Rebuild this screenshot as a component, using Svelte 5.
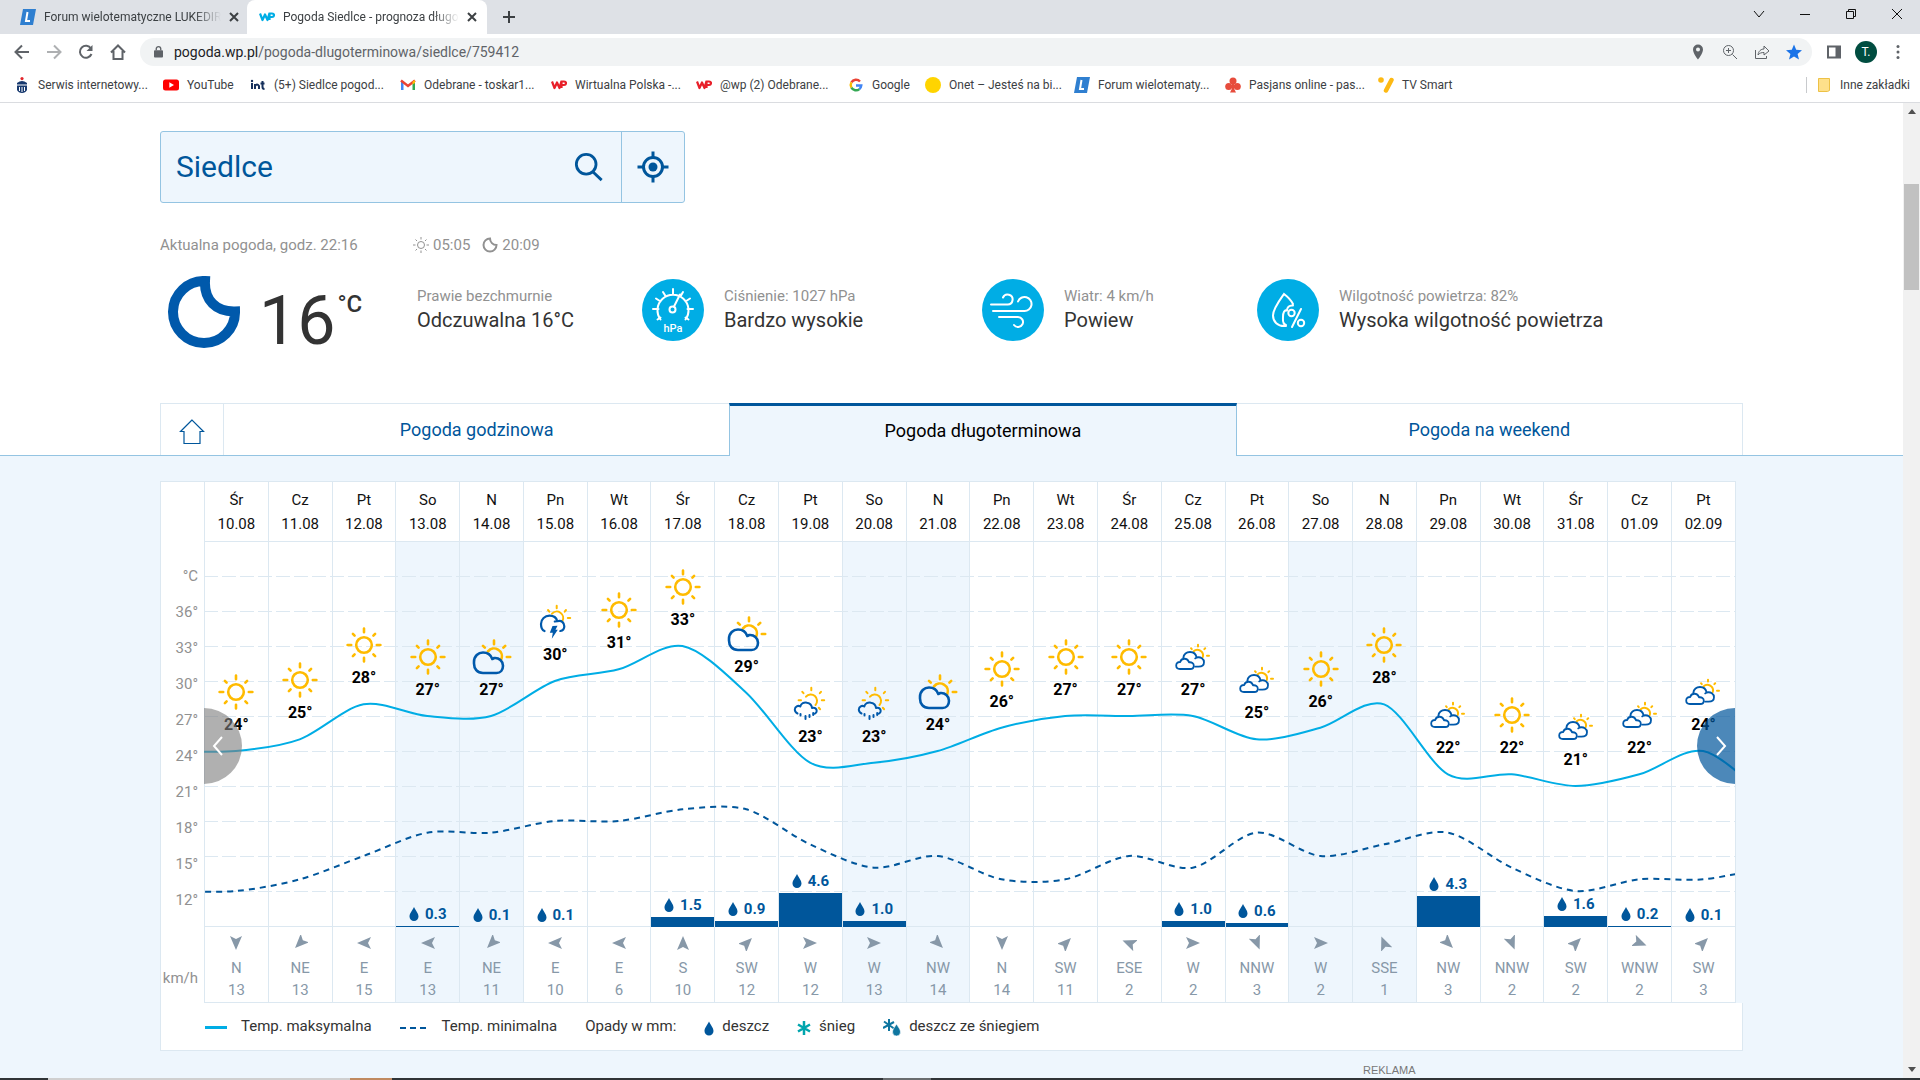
<script>
  // Geometry of the plot area
  const COL = 64;
  const PLOT_HEIGHT = 385;
  const ZERO_LEVEL = 12; // temperature drawn on the lowest grid line
  const STEP = 35; // height of three degrees

  const bookmarks = [
    { icon: 'bank', label: 'Serwis internetowy...', width: 149 },
    { icon: 'youtube', label: 'YouTube', width: 87 },
    { icon: 'int', label: '(5+) Siedlce pogod...', width: 150 },
    { icon: 'gmail', label: 'Odebrane - toskar1...', width: 151 },
    { icon: 'wp', label: 'Wirtualna Polska -...', width: 145 },
    { icon: 'wp', label: '@wp (2) Odebrane...', width: 152 },
    { icon: 'google', label: 'Google', width: 77 },
    { icon: 'onet', label: 'Onet – Jesteś na bi...', width: 149 },
    { icon: 'forum', label: 'Forum wielotematy...', width: 151 },
    { icon: 'club', label: 'Pasjans online - pas...', width: 153 },
    { icon: 'tv', label: 'TV Smart', width: 90 }
  ];

  // day, date, icon, max, min, rain in mm, rain bar height, wind direction, wind speed
  const days = [
    ['Śr', '10.08', 'sun', 24, 12, null, 0, 'N', 13],
    ['Cz', '11.08', 'sun', 25, 13, null, 0, 'NE', 13],
    ['Pt', '12.08', 'sun', 28, 15, null, 0, 'E', 15],
    ['So', '13.08', 'sun', 27, 17, '0.3', 1, 'E', 13],
    ['N', '14.08', 'partly', 27, 17, '0.1', 0, 'NE', 11],
    ['Pn', '15.08', 'storm', 30, 18, '0.1', 0, 'E', 10],
    ['Wt', '16.08', 'sun', 31, 18, null, 0, 'E', 6],
    ['Śr', '17.08', 'sun', 33, 19, '1.5', 10, 'S', 10],
    ['Cz', '18.08', 'partly', 29, 19, '0.9', 6, 'SW', 12],
    ['Pt', '19.08', 'showers', 23, 16, '4.6', 34, 'W', 12],
    ['So', '20.08', 'showers', 23, 14, '1.0', 6, 'W', 13],
    ['N', '21.08', 'partly', 24, 15, null, 0, 'NW', 14],
    ['Pn', '22.08', 'sun', 26, 13, null, 0, 'N', 14],
    ['Wt', '23.08', 'sun', 27, 13, null, 0, 'SW', 11],
    ['Śr', '24.08', 'sun', 27, 15, null, 0, 'ESE', 2],
    ['Cz', '25.08', 'clouds', 27, 14, '1.0', 6, 'W', 2],
    ['Pt', '26.08', 'clouds', 25, 17, '0.6', 4, 'NNW', 3],
    ['So', '27.08', 'sun', 26, 15, null, 0, 'W', 2],
    ['N', '28.08', 'sun', 28, 16, null, 0, 'SSE', 1],
    ['Pn', '29.08', 'clouds', 22, 17, '4.3', 31, 'NW', 3],
    ['Wt', '30.08', 'sun', 22, 14, null, 0, 'NNW', 2],
    ['Śr', '31.08', 'clouds', 21, 12, '1.6', 11, 'SW', 2],
    ['Cz', '01.09', 'clouds', 22, 13, '0.2', 1, 'WNW', 2],
    ['Pt', '02.09', 'clouds', 24, 13, '0.1', 0, 'SW', 3]
  ].map(([day, date, icon, max, min, rain, bar, wind, speed]) => ({
    day, date, icon, max, min, rain, bar, wind, speed,
    weekend: day === 'So' || day === 'N'
  }));

  const axis = ['°C', '36°', '33°', '30°', '27°', '24°', '21°', '18°', '15°', '12°'];

  // Wind comes from the named direction, the arrow shows where it blows
  const arrowAngle = {
    N: 180, NE: 225, E: 270, SSE: 338, ESE: 292, S: 0, SW: 45, W: 90, WNW: 112, NW: 135, NNW: 158
  };

  const fromBottom = (temp) => STEP + ((temp - ZERO_LEVEL) * STEP) / 3;

  // Smooth curve through all points
  function curve(values) {
    const p = values.map((v, i) => [(i - 0.5) * COL, PLOT_HEIGHT - fromBottom(v)]);
    const tangent = (i) => {
      const a = p[Math.max(i - 1, 0)];
      const b = p[Math.min(i + 1, p.length - 1)];
      return [(b[0] - a[0]) * 0.15, (b[1] - a[1]) * 0.15];
    };
    let d = `M${p[0]}`;
    for (let i = 1; i < p.length; i++) {
      const s = tangent(i - 1);
      const e = tangent(i);
      d += `C${p[i - 1][0] + s[0]},${p[i - 1][1] + s[1]} ${p[i][0] - e[0]},${p[i][1] - e[1]} ${p[i]}`;
    }
    return d;
  }

  const maxLine = curve([24, ...days.map((d) => d.max), 20]);
  const minLine = curve([12, ...days.map((d) => d.min), 14]);
  const gridLines = Array.from({ length: 10 }, (_, i) => (i + 1) * STEP);

  let city = $state('Siedlce');
</script>

{#snippet favicon(name)}
  <svg class="favicon" viewBox="0 0 16 16" aria-hidden="true">
    {#if name === 'forum'}
      <path d="M3 0h13l-3 16H0z" fill="#2f7fd0" />
      <path d="M7.5 3 6 12h4" fill="none" stroke="#fff" stroke-width="2" />
    {:else if name === 'bank'}
      <circle cx="8" cy="1.6" r="1.6" fill="#e3262c" />
      <path d="M3 6q5-4 10 0v7q-1.500 3-5 3t-5-3z" fill="#17396f" />
      <path d="M3 8h10M5.500 10v4M8 10v5M10.500 10v4" stroke="#fff" />
    {:else if name === 'youtube'}
      <rect y="2.500" width="16" height="11" rx="2.500" fill="#f00" />
      <path d="M6.300 5.300v5.400L11 8z" fill="#fff" />
    {:else if name === 'int'}
      <path d="M2 6v6M5 12V7m0 2q2-3 4 0v3M12.500 4v6q0 2 2 2M10.500 6.500h4" fill="none" stroke="#16305c" stroke-width="2" />
      <circle cx="2" cy="4" r="1.200" fill="#16305c" />
    {:else if name === 'gmail'}
      <path d="M1 3v10h2.500V6z" fill="#4285f4" />
      <path d="M15 3v10h-2.500V6z" fill="#34a853" />
      <path d="M1 3.500 8 9l7-5.500" fill="none" stroke="#ea4335" stroke-width="2.500" />
      <path d="M12.500 4.500 15 3v3l-2.500 1.500z" fill="#fbbc04" />
    {:else if name === 'wp' || name === 'wpblue'}
      <path d="M1 4.500 3.500 11 6 5.500 8.500 11l2-7M10.500 11V4.500h2.500q2 0 2 1.700T13 8h-2" fill="none" stroke={name === 'wp' ? '#e8202a' : '#00ade5'} stroke-width="2.200" stroke-linejoin="round" />
    {:else if name === 'google'}
      <g fill="none" stroke-width="2.400">
        <path d="M12 4.500A5.300 5.300 0 0 0 3.400 5.400" stroke="#ea4335" />
        <path d="M3.400 5.400a5.300 5.300 0 0 0 0 5.200" stroke="#fbbc05" />
        <path d="M3.400 10.600a5.300 5.300 0 0 0 8 1.500" stroke="#34a853" />
        <path d="M11.400 12.100A5.300 5.300 0 0 0 13.300 8.500H8" stroke="#4285f4" />
      </g>
    {:else if name === 'onet'}
      <circle cx="8" cy="8" r="8" fill="#ffd400" />
    {:else if name === 'club'}
      <g fill="#e74c3c">
        <circle cx="8" cy="4" r="3.500" />
        <circle cx="3.700" cy="9.500" r="3.500" />
        <circle cx="12.300" cy="9.500" r="3.500" />
        <path d="M7 6h2v5.500l2 4H5l2-4z" />
      </g>
    {:else if name === 'tv'}
      <circle cx="3" cy="3" r="2.800" fill="#fdb913" />
      <path d="M13.500 3 8 13.500" stroke="#fdb913" stroke-width="4.500" stroke-linecap="round" />
    {/if}
  </svg>
{/snippet}

{#snippet weather(name)}
  <svg class="weather" viewBox="0 0 40 40" fill="none" stroke-linecap="round" stroke-linejoin="round" aria-hidden="true">
    {#if name === 'sun'}
      <g stroke="#fb0" stroke-width="2.600">
        <circle cx="20" cy="20" r="7.800" />
        <path d="M20 3.600v3.600M20 32.800v3.600M3.600 20h3.600M32.800 20h3.600M8.900 8.900l1.700 1.700M29.400 29.400l1.700 1.700M31.100 8.900l-1.700 1.700M8.900 31.100l1.700-1.700" />
      </g>
    {:else if name === 'partly'}
      <g stroke="#fb0" stroke-width="2.600">
        <path d="M16 14.400a7.800 7.800 0 0 1 13.300 7.800M22 3.600v3.600M11 8.900l1.800 1.800M33.200 8.900l-1.800 1.800M34.800 20h3.400" />
      </g>
      <path d="M11 36C5 36 2 31.500 2 26.500v-1.500C2 19 6.300 15.500 11 15.500c4.500 0 8 2.700 9.300 6.500l2-1C27 20.500 31 24 31 28.700 31 33 28.500 36 24.500 36z" stroke="#0059ab" stroke-width="2.600" />
    {:else if name === 'storm'}
      <path d="M17 11.700a6.400 6.400 0 0 1 10.400 7.300M21.700 3.800v2.400M13 8l1.300 1.600M31 8l-1.300 1.600M32.800 16h2.400" stroke="#fb0" stroke-width="2" />
      <path d="M9.500 29C7 28 6 25.500 6 22c0-5 4-8.300 8.500-8.300 4.200 0 7 2.300 7.800 5.500C27 18 29.300 21 29.300 24.300c0 2.700-1.500 4.300-4 4.700M19.800 19.500l2.500-.3" stroke="#0059ab" stroke-width="2.200" />
      <path d="m17.500 24 5-.3-2 4h2.300l-6 9 1-6h-3z" fill="#0059ab" />
    {:else if name === 'showers'}
      <path d="M16 12.700a6.300 6.300 0 1 1 9.500 8.300M21.300 3.800v2.400M8.600 16.300H11M31.800 16.300h2.400M12.300 7.800l1.200 1.400M31 7.800l-1.200 1.400M28.800 23.800l1.300 1.400" stroke="#fb0" stroke-width="2" />
      <path d="M7.500 29.500C5.500 28.500 4.800 27 4.800 25.500 5 22.500 8 21 10.300 22.500 11 19.500 14 18 17 18.700c3 .6 4.800 2.800 5 5.300 3-1 4.700 1 4.700 3 0 1.300-.7 2.300-2 2.700" stroke="#0059ab" stroke-width="2" />
      <path d="M10.500 30v1.500M15.500 32v3M19.500 31v2M23.200 29v2" stroke="#0059ab" stroke-width="2" />
    {:else}
      <path d="M20.500 14.500a5.600 5.600 0 0 1 9.300 5.500M25 7.800v1.600M18 11.200l.8.900M32.200 11.200l-.9.900M34 18.700h2" stroke="#fb0" stroke-width="2" />
      <path d="M10.300 20.800C11 17 14 15 17 15c3.500 0 6 2.200 6.600 5.500 4.200-1 7.400 1.400 7.400 4.700 0 3-2.300 4.500-5.500 4.500h-3M23.600 20.500l-1.400.9M7 32c-2.600 0-3.800-1.500-3.800-3.500C3.200 26 5 24.800 7.200 25c1-4 7-4.800 8.800.3 2.800-.4 4.800 1 4.800 3.400 0 2-1.500 3.300-3.600 3.300z" stroke="#0059ab" stroke-width="1.800" />
    {/if}
  </svg>
{/snippet}

{#snippet drop()}
  <svg class="drop" viewBox="0 0 10 14" aria-hidden="true">
    <path d="M5 0C7 4 9.500 6.500 9.500 9.500a4.500 4.500 0 0 1-9 0C.5 6.500 3 4 5 0z" fill="currentColor" />
  </svg>
{/snippet}

<div class="window">
  <!-- Browser tabs -->
  <header class="tabstrip">
    <div class="tab">
      {@render favicon('forum')}
      <span class="tab-title">Forum wielotematyczne LUKEDIR</span>
      <button class="close" aria-label="Zamknij kartę">
        <svg viewBox="0 0 10 10"><path d="m1 1 8 8m0-8-8 8" /></svg>
      </button>
    </div>
    <div class="tab active">
      {@render favicon('wpblue')}
      <span class="tab-title">Pogoda Siedlce - prognoza długo</span>
      <button class="close" aria-label="Zamknij kartę">
        <svg viewBox="0 0 10 10"><path d="m1 1 8 8m0-8-8 8" /></svg>
      </button>
    </div>
    <button class="new-tab" aria-label="Nowa karta">
      <svg viewBox="0 0 14 14"><path d="M7 1v12M1 7h12" /></svg>
    </button>
    <div class="controls">
      <button aria-label="Szukaj kart"><svg viewBox="0 0 12 12"><path d="m1 3 5 6 5-6" /></svg></button>
      <button aria-label="Minimalizuj"><svg viewBox="0 0 12 12"><path d="M1 6.500h10" /></svg></button>
      <button aria-label="Przywróć"><svg viewBox="0 0 12 12"><path d="M1.500 3.500h7v7h-7zM3.500 3V1.500h7v7H9" /></svg></button>
      <button aria-label="Zamknij"><svg viewBox="0 0 12 12"><path d="m1 1 10 10m0-10L1 11" /></svg></button>
    </div>
  </header>

  <!-- Address bar -->
  <div class="toolbar">
    <button aria-label="Wstecz"><svg viewBox="0 0 16 16"><path d="M15 8H2m6-6.500L1.500 8 8 14.500" /></svg></button>
    <button class="disabled" aria-label="Dalej"><svg viewBox="0 0 16 16"><path d="M1 8h13M8 1.500 14.500 8 8 14.500" /></svg></button>
    <button aria-label="Odśwież"><svg viewBox="0 0 16 16"><path d="M13.500 10A6 6 0 1 1 13 4.500" /><path d="M14.500 1v6h-6z" fill="#5f6368" stroke="none" /></svg></button>
    <button aria-label="Strona główna"><svg viewBox="0 0 16 16"><path d="M1 8.500 8 1.500l7 7M3.500 7v8h9V7" /></svg></button>
    <div class="address">
      <svg class="lock" viewBox="0 0 10 14"><rect y="5" width="10" height="8" rx="1" fill="#5f6368" /><path d="M2.500 5V3.500a2.500 2.500 0 0 1 5 0V5" fill="none" stroke="#5f6368" stroke-width="1.500" /></svg>
      <span class="url"><b>pogoda.wp.pl</b>/pogoda-dlugoterminowa/siedlce/759412</span>
      <button aria-label="Lokalizacja"><svg viewBox="0 0 16 16"><path d="M8 .5a5 5 0 0 0-5 5c0 4 5 10 5 10s5-6 5-10a5 5 0 0 0-5-5zm0 3a2 2 0 1 1 0 4 2 2 0 0 1 0-4z" fill="#5f6368" stroke="none" /></svg></button>
      <button aria-label="Powiększenie"><svg class="thin" viewBox="0 0 16 16"><circle cx="6.500" cy="6.500" r="5" /><path d="m10.500 10.500 4.500 4.500M4 6.500h5M6.500 4v5" /></svg></button>
      <button aria-label="Udostępnij"><svg class="thin" viewBox="0 0 16 16"><path d="M1.500 6v8.500h11V12M4 11c.5-4 3-6 6-6V2l5 5-5 4V8.500C7.500 8.500 5.500 9 4 11z" /></svg></button>
      <button aria-label="Zakładka"><svg viewBox="0 0 16 16"><path d="m8 .5 2.200 5.300 5.800.4-4.400 3.700 1.400 5.600L8 12.400l-5 3.100 1.400-5.600L0 6.200l5.800-.4z" fill="#1a73e8" stroke="none" /></svg></button>
    </div>
    <button aria-label="Panel boczny"><svg viewBox="0 0 16 16"><path d="M2 2.500h12v11H2z" /><path d="M9.500 2h5v12h-5z" fill="#5f6368" stroke="none" /></svg></button>
    <button class="avatar" aria-label="Profil">T.</button>
    <button aria-label="Menu"><svg viewBox="0 0 16 16"><g fill="#5f6368" stroke="none"><circle cx="8" cy="2.500" r="1.500" /><circle cx="8" cy="8" r="1.500" /><circle cx="8" cy="13.500" r="1.500" /></g></svg></button>
  </div>

  <nav class="bookmarks">
    {#each bookmarks as b}
      <a href="#{b.icon}" style:width="{b.width}px">{@render favicon(b.icon)}<span>{b.label}</span></a>
    {/each}
    <a class="other" href="#inne">
      <svg class="favicon" viewBox="0 0 16 16"><path d="M2.500 1.500h11v12l-2 1h-9z" fill="#fee08b" stroke="#edc145" /></svg>
      <span>Inne zakładki</span>
    </a>
  </nav>

  <div class="viewport">
    <main>
      <section class="container current">
        <form class="search" onsubmit={(e) => e.preventDefault()}>
          <input aria-label="Miejscowość" bind:value={city} />
          <button class="find" aria-label="Szukaj">
            <svg viewBox="0 0 32 32"><circle cx="13" cy="13" r="10.500" /><path d="m19.500 20.500 10 9.500" /></svg>
          </button>
          <button class="locate" type="button" aria-label="Zlokalizuj mnie">
            <svg viewBox="0 0 32 32"><circle cx="16" cy="16" r="9.500" /><circle cx="16" cy="16" r="4.500" fill="#00569b" stroke="none" /><path d="M16 .5v6M16 25.500v6M.5 16h6M25.500 16h6" /></svg>
          </button>
        </form>

        <div class="meta">
          <span>Aktualna pogoda, godz. 22:16</span>
          <span class="times">
            <svg viewBox="0 0 16 16"><circle cx="8" cy="8" r="3.500" /><path d="M8 0v2.500M8 13.500V16M0 8h2.500M13.500 8H16M2.500 2.500l1.500 1.500M12 12l1.500 1.500M13.500 2.500 12 4M4 12l-1.500 1.500" /></svg>
            05:05
            <svg class="moon-small" viewBox="0 0 16 16"><path d="M8 1.500A6.500 6.500 0 1 0 14.500 8 6.500 6.500 0 0 1 8 1.500z" stroke-width="2" /></svg>
            20:09
          </span>
        </div>

        <div class="now">
          <div class="temp">
            <svg class="moon" viewBox="0 0 72 72"><path d="M37 5A31 31 0 1 0 67 35.500C48 36 36 24 37 5z" /></svg>
            <span class="degrees">16</span><sup>°C</sup>
          </div>
          <div class="fact">
            <p><small>Prawie bezchmurnie</small>Odczuwalna 16°C</p>
          </div>
          <div class="fact">
            <svg class="badge" viewBox="0 0 62 62">
              <circle cx="31" cy="31" r="31" fill="#00ade5" stroke="none" />
              <path d="M18.500 40.500a15.500 15.500 0 1 1 25 0M31 10v5.500M11 30h5.500M45.500 30H51M14 19.500l4.500 3M48 19.500l-4.500 3M21 13l2.500 4M41 13l-2 3.500M15.500 40.500l3-2M46.500 40.500l-3-2" />
              <circle cx="30.500" cy="30.500" r="3" /><path d="m32 27.500 6-12" />
              <text x="31" y="53">hPa</text>
            </svg>
            <p><small>Ciśnienie: 1027 hPa</small>Bardzo wysokie</p>
          </div>
          <div class="fact">
            <svg class="badge" viewBox="0 0 62 62">
              <circle cx="31" cy="31" r="31" fill="#00ade5" stroke="none" />
              <path d="M9 25.500h16.500a5 5 0 1 0-4.500-7M11 32h31a7 7 0 1 0-6-9.500M17 38h19a5 5 0 1 1-4 8" />
            </svg>
            <p><small>Wiatr: 4 km/h</small>Powiew</p>
          </div>
          <div class="fact">
            <svg class="badge" viewBox="0 0 62 62">
              <circle cx="31" cy="31" r="31" fill="#00ade5" stroke="none" />
              <path d="M36 25c-2-4-5-7-9-10-5 7-11 15-11 21.500C16 43 21 47 27 47h2M36 26.500c-4-.5-6 2-6 5M29 46c-4-1-3-5-3-8 0-4 1-7 4-7" />
              <circle cx="34.500" cy="34" r="3.200" /><circle cx="44" cy="44" r="3.200" /><path d="m44 30-9 18" />
            </svg>
            <p><small>Wilgotność powietrza: 82%</small>Wysoka wilgotność powietrza</p>
          </div>
        </div>
      </section>

      <div class="tabs-line">
        <nav class="container tabs">
          <a class="home" href="#start" aria-label="Start">
            <svg viewBox="0 0 26 26"><path d="M13 1 1.500 12.500H5v12h16v-12h3.500z" /></svg>
          </a>
          <a href="#godzinowa">Pogoda godzinowa</a>
          <a class="selected" href="#dlugoterminowa">Pogoda długoterminowa</a>
          <a href="#weekend">Pogoda na weekend</a>
        </nav>
      </div>

      <section class="forecast">
        <div class="container">
          <div class="chart">
            <div class="axis">
              {#each axis as label}<span>{label}</span>{/each}
              <span class="unit">km/h</span>
            </div>
            <div class="plot">
              <table>
                <thead>
                  <tr>
                    {#each days as d}
                      <th scope="col">{d.day}<br />{d.date}</th>
                    {/each}
                  </tr>
                </thead>
                <tbody>
                  <tr class="temps">
                    {#each days as d}
                      <td class:weekend={d.weekend}>
                        <div class="cell">
                          <div class="point" style:bottom="{fromBottom(d.max) + 16}px">
                            {@render weather(d.icon)}
                            <strong>{d.max}°</strong>
                          </div>
                          {#if d.rain}
                            <div class="rain">
                              <span>{@render drop()}{d.rain}</span>
                              <div class="bar" style:height="{d.bar}px"></div>
                            </div>
                          {/if}
                        </div>
                      </td>
                    {/each}
                  </tr>
                  <tr class="winds">
                    {#each days as d}
                      <td class:weekend={d.weekend}>
                        <svg viewBox="-8 -8 16 16" aria-hidden="true"><path d="M0-7 6 7 0 4-6 7z" transform="rotate({arrowAngle[d.wind]})" /></svg>
                        {d.wind}<br />{d.speed}
                      </td>
                    {/each}
                  </tr>
                </tbody>
              </table>
              <svg class="lines" viewBox="0 0 {COL * days.length} {PLOT_HEIGHT}" preserveAspectRatio="none" aria-hidden="true">
                {#each gridLines as y}
                  <path class="grid" d="M0 {y}H{COL * days.length}" />
                {/each}
                <path class="max" d={maxLine} />
                <path class="min" d={minLine} />
              </svg>
              <button class="scroll prev" aria-label="Poprzednie dni"><svg viewBox="0 0 12 20"><path d="m10 1-8 9 8 9" /></svg></button>
              <button class="scroll next" aria-label="Następne dni"><svg viewBox="0 0 12 20"><path d="m2 1 8 9-8 9" /></svg></button>
            </div>
          </div>

          <div class="legend">
            <span class="key"><i class="solid"></i>Temp. maksymalna</span>
            <span class="key"><i class="dashed"></i>Temp. minimalna</span>
            <span>Opady w mm:</span>
            <span class="kind">{@render drop()}deszcz</span>
            <span class="kind"><svg class="snow" viewBox="0 0 14 14"><path d="M7 0v14M1 3.500l12 7M1 10.500l12-7" stroke="#00a5ad" stroke-width="2.500" /></svg>śnieg</span>
            <span class="kind"><svg class="sleet" viewBox="0 0 18 18"><path d="M6 0v12M1 2.500l10 7M0 9l11-6" stroke="#0f76a0" stroke-width="2" /><path d="M13.500 5c1.500 3 4 5 4 8a4 4 0 0 1-8 0c0-3 2.500-5 4-8z" fill="#0f76a0" stroke="#fff" stroke-width=".6" /></svg>deszcz ze śniegiem</span>
          </div>
          <p class="ad">REKLAMA</p>
        </div>
      </section>
    </main>

    <div class="scrollbar">
      <svg viewBox="0 0 8 5"><path d="M0 5 4 0l4 5z" fill="#505050" /></svg>
      <div class="thumb"></div>
      <svg viewBox="0 0 8 5"><path d="m0 0 4 5 4-5z" fill="#505050" /></svg>
    </div>
  </div>
  <footer class="taskbar"></footer>
</div>

<style>
  :global(body) {
    margin: 0;
    background: #fff;
  }
  .window {
    height: 100vh;
    display: flex;
    flex-direction: column;
    overflow: hidden;
    font-family: Roboto, 'Segoe UI', sans-serif;
    font-size: 12px;
    color: #3c4043;
  }
  .window :global(*) {
    box-sizing: border-box;
  }
  button {
    padding: 0;
    border: none;
    background: none;
    font: inherit;
    cursor: pointer;
    display: flex;
    align-items: center;
    justify-content: center;
  }
  a {
    color: inherit;
    text-decoration: none;
  }
  svg {
    display: block;
    flex: none;
  }

  /* Browser tabs */
  .tabstrip {
    flex: none;
    display: flex;
    height: 34px;
    background: #dee1e6;
  }
  .tab {
    display: flex;
    align-items: center;
    width: 240px;
    padding: 0 10px 0 12px;
    gap: 8px;
  }
  .tab:first-child {
    width: 247px;
    padding: 0 10px 0 20px;
  }
  .tab.active {
    background: #fff;
    border-radius: 8px 8px 0 0;
  }
  .tab-title {
    flex: 1;
    white-space: nowrap;
    mask-image: linear-gradient(to right, #000 85%, transparent);
  }
  .favicon {
    width: 16px;
    height: 16px;
  }
  .close svg {
    width: 10px;
    height: 10px;
    stroke: #3c4043;
    stroke-width: 2;
  }
  .new-tab {
    width: 44px;
  }
  .new-tab svg {
    width: 14px;
    height: 14px;
    stroke: #3c4043;
    stroke-width: 2;
  }
  .controls {
    display: flex;
    margin-left: auto;
  }
  .controls button {
    width: 46px;
    height: 28px;
  }
  .controls svg {
    width: 12px;
    height: 12px;
    fill: none;
    stroke: #111;
  }

  /* Address bar */
  .toolbar {
    flex: none;
    display: flex;
    align-items: center;
    height: 36px;
    padding: 0 6px;
  }
  .toolbar button {
    width: 32px;
    height: 28px;
  }
  .toolbar button svg {
    width: 16px;
    height: 16px;
    fill: none;
    stroke: #5f6368;
    stroke-width: 2;
  }
  .toolbar button svg.thin {
    stroke-width: 1;
  }
  .toolbar .disabled {
    opacity: 0.5;
  }
  .address {
    flex: 1;
    display: flex;
    align-items: center;
    height: 28px;
    margin: 0 6px;
    padding: 0 2px 0 14px;
    border-radius: 14px;
    background: #f1f3f4;
    font-size: 14px;
  }
  .lock {
    width: 9px;
    height: 14px;
    margin-right: 11px;
  }
  .url {
    flex: 1;
    color: #5f6368;
    white-space: nowrap;
  }
  .url b {
    font-weight: 400;
    color: #202124;
  }
  .toolbar .avatar {
    width: 22px;
    height: 22px;
    margin: 0 5px;
    border-radius: 50%;
    background: #004d40;
    color: #fff;
  }

  /* Bookmarks */
  .bookmarks {
    flex: none;
    display: flex;
    align-items: center;
    height: 33px;
    padding: 0 10px 3px 14px;
    border-bottom: 1px solid #dadce0;
  }
  .bookmarks a {
    display: flex;
    align-items: center;
    gap: 8px;
    white-space: nowrap;
  }
  .bookmarks .other {
    margin-left: auto;
    padding-left: 9px;
    border-left: 1px solid #c8cacd;
  }

  /* Page */
  .viewport {
    flex: 1;
    min-height: 0;
    display: flex;
  }
  main {
    flex: 1;
    min-width: 0;
    display: flex;
    flex-direction: column;
    overflow: hidden;
    font-family: Roboto, sans-serif;
    font-size: 16px;
    color: #333;
  }
  .container {
    width: min(1583px, 100% - 64px);
    margin: 0 auto;
  }
  .search {
    display: flex;
    width: 525px;
    height: 72px;
    margin-top: 28px;
    border: 1px solid #94c4e2;
    border-radius: 3px;
    background: #eef6fd;
  }
  .search input {
    flex: 1;
    min-width: 0;
    padding: 0 15px 2px;
    border: none;
    outline: none;
    background: none;
    font: 30px Roboto, sans-serif;
    color: #00569b;
  }
  .search svg {
    width: 32px;
    height: 32px;
    fill: none;
    stroke: #00569b;
    stroke-width: 3;
  }
  .find {
    width: 64px;
  }
  .find svg {
    width: 30px;
    height: 30px;
  }
  .locate {
    width: 63px;
    border-left: 1px solid #94c4e2;
  }
  .meta {
    display: flex;
    align-items: center;
    height: 24px;
    margin-top: 30px;
    font-size: 15px;
    color: #919191;
  }
  .meta > span:first-child {
    width: 253px;
  }
  .times {
    display: flex;
    align-items: center;
    gap: 4px;
  }
  .times svg {
    width: 16px;
    height: 16px;
    fill: none;
    stroke: #919191;
  }
  .times .moon-small {
    margin-left: 8px;
  }
  .now {
    display: grid;
    grid-template-columns: 257px 225px 340px 275px 1fr;
    height: 146px;
    padding-top: 19px;
  }
  .temp {
    display: flex;
    align-items: flex-start;
    padding-left: 8px;
  }
  .moon {
    width: 72px;
    height: 72px;
    fill: none;
    stroke: #0059ab;
    stroke-width: 10;
  }
  .degrees {
    margin-left: 19px;
    padding-top: 9px;
    font-size: 68px;
    line-height: 72px;
  }
  .temp sup {
    margin-left: 2px;
    padding-top: 14px;
    font-size: 24px;
    font-weight: 500;
    line-height: 28px;
  }
  .fact {
    display: flex;
    gap: 20px;
    padding-top: 3px;
  }
  .fact p {
    margin: 0;
    padding-top: 6px;
    font-size: 20px;
    line-height: 26px;
  }
  .fact small {
    display: block;
    font-size: 15px;
    line-height: 22px;
    color: #919191;
  }
  .badge {
    width: 62px;
    height: 62px;
    fill: none;
    stroke: #fff;
    stroke-width: 2;
    stroke-linecap: round;
  }
  .badge text {
    fill: #fff;
    stroke: none;
    font-size: 11px;
    font-weight: 500;
    text-anchor: middle;
  }

  /* Page tabs */
  .tabs-line {
    border-bottom: 1px solid #94c4e2;
  }
  .tabs {
    display: flex;
    height: 52px;
  }
  .tabs a {
    flex: 1;
    display: flex;
    align-items: center;
    justify-content: center;
    border: 1px solid #dce8f1;
    border-width: 1px 1px 0 0;
    font-size: 18px;
    color: #00569b;
  }
  .tabs .home {
    flex: none;
    width: 64px;
    border-left-width: 1px;
  }
  .home svg {
    width: 26px;
    height: 26px;
    margin-top: 5px;
    fill: none;
    stroke: #00569b;
    stroke-width: 1.2;
  }
  .tabs .selected {
    margin: 0 0 -1px -1px;
    padding-bottom: 2px;
    border: 1px solid #94c4e2;
    border-top: 3px solid #00569b;
    border-bottom: none;
    background: #eef6fd;
    color: #000;
  }

  /* Forecast */
  .forecast {
    flex: 1;
    padding-top: 25px;
    background: #eef6fd;
  }
  .chart {
    display: flex;
    margin-right: 7px;
    border: 1px solid #dce8f1;
    border-bottom: none;
    background: #fff;
  }
  .axis {
    flex: none;
    width: 43px;
    padding: 76px 6px 0 0;
    display: flex;
    flex-direction: column;
    color: #919191;
    font-size: 15px;
    line-height: 36px;
    text-align: right;
  }
  .axis .unit {
    margin-top: 42px;
  }
  .plot {
    flex: 1;
    min-width: 0;
    position: relative;
    overflow: hidden;
  }
  table {
    width: 100%;
    table-layout: fixed;
    border-spacing: 0;
    font-size: 15px;
  }
  th,
  td {
    padding: 0;
    border-left: 1px solid #dce8f1;
    border-bottom: 1px solid #dce8f1;
    text-align: center;
  }
  th {
    height: 60px;
    font-weight: 400;
    line-height: 24px;
    color: #111;
  }
  .weekend {
    background: #eef6fd;
  }
  .cell {
    position: relative;
    height: 384px;
  }
  .point {
    position: absolute;
    z-index: 1;
    left: 0;
    right: 0;
    color: #000;
  }
  .point strong {
    display: block;
    padding-top: 3px;
    font-size: 16px;
    font-weight: 700;
    line-height: 20px;
  }
  .weather {
    width: 40px;
    height: 40px;
    margin: 0 auto;
  }
  .rain {
    position: absolute;
    z-index: 1;
    left: 0;
    right: 0;
    bottom: -1px;
    color: #00569b;
    font-weight: 700;
    line-height: 24px;
  }
  .rain span {
    display: flex;
    align-items: center;
    justify-content: center;
    gap: 6px;
  }
  .drop {
    width: 10px;
    height: 14px;
  }
  .bar {
    background: #00569b;
  }
  .winds td {
    height: 76px;
    padding-top: 6px;
    line-height: 22px;
    color: #8798a8;
  }
  .winds svg {
    width: 16px;
    height: 16px;
    margin: 0 auto 6px;
    fill: #8798a8;
  }
  .lines {
    position: absolute;
    left: 0;
    top: 59px;
    width: 100%;
    height: 385px;
  }
  .lines path {
    fill: none;
    vector-effect: non-scaling-stroke;
  }
  .lines .grid {
    stroke: #dce8f1;
    stroke-dasharray: 14 4;
    shape-rendering: crispEdges;
  }
  .lines .max {
    stroke: #00ade5;
    stroke-width: 2;
  }
  .lines .min {
    stroke: #00569b;
    stroke-width: 2;
    stroke-dasharray: 6 5;
  }
  .scroll {
    position: absolute;
    z-index: 2;
    top: 226px;
    width: 38px;
    height: 76px;
  }
  .scroll svg {
    width: 12px;
    height: 20px;
    fill: none;
    stroke: #fff;
    stroke-width: 2;
  }
  .prev {
    left: 0;
    padding-right: 10px;
    border-radius: 0 38px 38px 0;
    background: rgba(128, 128, 128, 0.62);
  }
  .next {
    right: 0;
    padding-left: 10px;
    border-radius: 38px 0 0 38px;
    background: rgba(0, 86, 155, 0.7);
  }
  .legend {
    display: flex;
    gap: 28px;
    height: 48px;
    border: 1px solid #dce8f1;
    border-top: none;
    background: #fff;
    padding-left: 44px;
    font-size: 15px;
    line-height: 46px;
    white-space: nowrap;
  }
  .key,
  .kind {
    display: flex;
    align-items: center;
    gap: 12px;
    height: 46px;
  }
  .key {
    gap: 14px;
  }
  .kind {
    gap: 8px;
  }
  .kind svg {
    margin-top: 4px;
  }
  .solid,
  .dashed {
    width: 22px;
    margin-top: 3px;
    border-top: 3px solid #00ade5;
  }
  .dashed {
    width: 28px;
    height: 2px;
    border: none;
    background: repeating-linear-gradient(to right, #00569b 0 6px, transparent 6px 10px);
  }
  .legend .drop {
    color: #00569b;
    height: 15px;
  }
  .snow {
    width: 14px;
    height: 14px;
  }
  .sleet {
    width: 18px;
    height: 18px;
  }
  .ad {
    margin: 11px 0 0;
    padding-left: 1203px;
    font: 11px/16px 'Liberation Sans', Arial, sans-serif;
    color: #777;
  }

  /* Window edges */
  .scrollbar {
    flex: none;
    width: 17px;
    display: flex;
    flex-direction: column;
    align-items: center;
    padding: 6px 0;
    background: #f1f1f1;
  }
  .scrollbar svg {
    width: 8px;
    height: 5px;
  }
  .scrollbar svg:last-child {
    margin-top: auto;
  }
  .thumb {
    width: 15px;
    height: 106px;
    margin-top: 70px;
    background: #c1c1c1;
  }
  .taskbar {
    flex: none;
    height: 2px;
    background: linear-gradient(to right, #303437 0 48px, #d0d0d0 48px 350px, #c08a60 350px 392px, #303437 392px 883px, #6a6d6f 883px 931px, #303437 931px);
  }
</style>
